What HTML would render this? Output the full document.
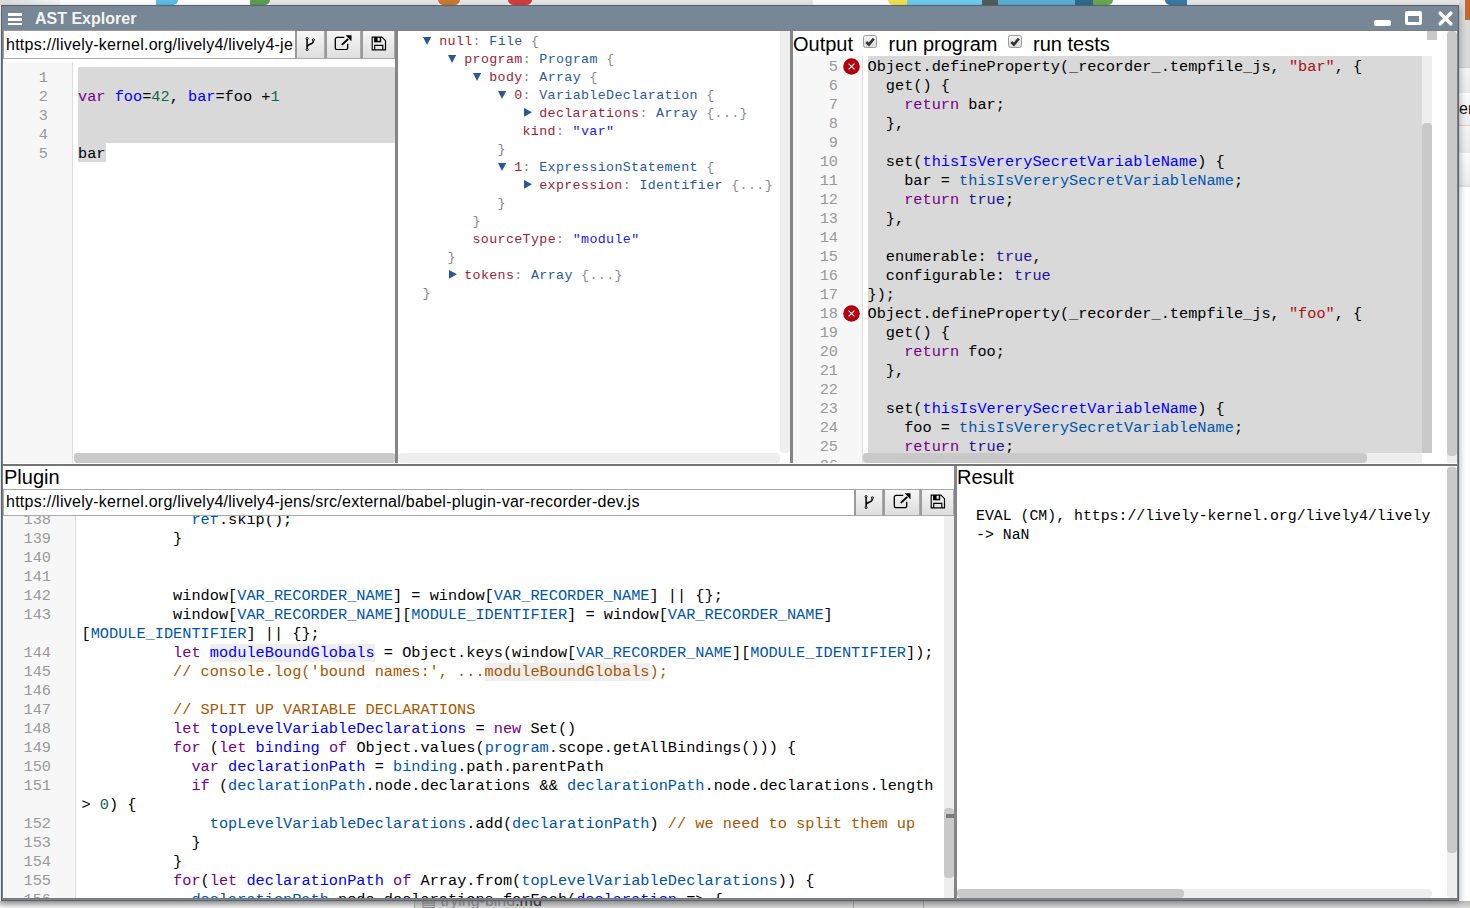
<!DOCTYPE html><html><head><meta charset="utf-8"><style>
*{box-sizing:border-box;margin:0;padding:0}
html,body{width:1470px;height:908px;overflow:hidden;position:relative}
body{font-family:"Liberation Sans",sans-serif;background:#ececec}
.a0{position:absolute}
.mono{font-family:"Liberation Mono",monospace;white-space:pre}
.k{color:#770088}.d{color:#0000ff}.v{color:#0055aa}.n{color:#116644}.s{color:#aa1111}.c{color:#aa5500}.a{color:#221199}
.hl{background:#eeeeee}
.ln{position:absolute;height:19px;line-height:19px;white-space:pre;font-family:"Liberation Mono",monospace;color:#000}
.gn{position:absolute;height:19px;line-height:19px;white-space:pre;font-family:"Liberation Mono",monospace;color:#999;text-align:right}
.btn{position:absolute;border:1px solid #a9a9a9;border-left:2px solid #9a9a9a;background:linear-gradient(#f6f6f6,#dedede)}
.ast{position:absolute;height:18px;line-height:18px;letter-spacing:0.37px;white-space:pre;font-family:"Liberation Mono",monospace;color:#8a8a8a}
.ak{color:#9b2335}.at{color:#2a5a9a}.as{color:#1a1aee}.tri{color:#2a5aa0}
.ui{position:absolute;font-family:"Liberation Sans",sans-serif;white-space:pre;color:#000}
</style></head><body><div class="a0" style="left:0px;top:0px;width:1470px;height:908px;background:#ffffff"></div><div class="a0" style="left:0px;top:0px;width:60px;height:5px;background:linear-gradient(90deg,#dcdcdc,#f4f4f4)"></div><div class="a0" style="left:156px;top:0px;width:22px;height:5px;background:#5bbde6;border-radius:0 0 14px 0"></div><div class="a0" style="left:250px;top:0px;width:20px;height:5px;background:#5a9e55;border-radius:0 0 14px 0"></div><div class="a0" style="left:270px;top:0px;width:168px;height:5px;background:#e6e6e6"></div><div class="a0" style="left:438px;top:0px;width:22px;height:5px;background:#c87a2e;border-radius:0 0 12px 12px"></div><div class="a0" style="left:460px;top:0px;width:48px;height:5px;background:#e6e6e6"></div><div class="a0" style="left:508px;top:0px;width:24px;height:5px;background:#d43c3c;border-radius:0 0 12px 12px"></div><div class="a0" style="left:532px;top:0px;width:281px;height:5px;background:#e6e6e6"></div><div class="a0" style="left:888px;top:0px;width:19px;height:5px;background:#f0e050;border-radius:0 0 0 10px"></div><div class="a0" style="left:907px;top:0px;width:75px;height:5px;background:#6ecbee"></div><div class="a0" style="left:982px;top:0px;width:16px;height:5px;background:#4f5e5a"></div><div class="a0" style="left:998px;top:0px;width:77px;height:5px;background:#5aaed6"></div><div class="a0" style="left:1075px;top:0px;width:18px;height:5px;background:#2f6a8e"></div><div class="a0" style="left:1093px;top:0px;width:20px;height:5px;background:#6aa84f;border-radius:0 0 10px 0"></div><div class="a0" style="left:1165px;top:0px;width:22px;height:5px;background:#3a78a8;border-radius:0 0 0 10px"></div><div class="a0" style="left:1187px;top:0px;width:273px;height:5px;background:#e6e6e6"></div><div class="a0" style="left:1459px;top:0px;width:11px;height:67px;background:#d9d9d9"></div><div class="a0" style="left:1459px;top:67px;width:11px;height:26px;background:linear-gradient(#f4f4f4,#e9e9e9);border-top:1px solid #cfcfcf"></div><div class="a0" style="left:1459px;top:93px;width:11px;height:32px;background:linear-gradient(#fafafa,#ececec);border-top:2px solid #fff"></div><div class="a0" style="left:1459px;top:125px;width:11px;height:28px;background:linear-gradient(#f4f4f4,#e9e9e9);border-top:1px solid #d4d4d4"></div><div class="a0" style="left:1459px;top:153px;width:11px;height:32px;background:linear-gradient(#fafafa,#ececec);border-top:2px solid #fff"></div><div class="a0" style="left:1459px;top:185px;width:11px;height:2px;background:#e0e0e0"></div><div class="ui" style="left:1459px;top:99px;font-size:16px;line-height:20px;color:#111">er</div><div class="a0" style="left:1465px;top:0px;width:5px;height:20px;background:#c06a30"></div><div class="a0" style="left:0px;top:901px;width:414px;height:7px;background:linear-gradient(#bcbcbc,#f4f4f4)"></div><div class="a0" style="left:414px;top:901px;width:1056px;height:7px;background:linear-gradient(#b8b8b8,#d9d9d9)"></div><div class="a0" style="left:853px;top:901px;width:1px;height:7px;background:#a0a0a0"></div><div class="a0" style="left:923px;top:901px;width:1px;height:7px;background:#a0a0a0"></div><div class="a0" style="left:414px;top:901px;width:1px;height:7px;background:#a8a8a8"></div><div class="ui" style="left:421px;top:891px;font-size:16px;color:#8c8c8c">&#9636; trying-bind<span style="color:#3a3a3a">.md</span></div><div class="a0" style="left:1px;top:5px;width:1458px;height:896px;background:#56626d;box-shadow:1px 2px 6px rgba(0,0,0,.3)"></div><div class="a0" style="left:2px;top:6px;width:1456px;height:894px;background:#778795"></div><div class="a0" style="left:2px;top:31px;width:1px;height:867px;background:#7d7d7d"></div><div class="a0" style="left:1457px;top:31px;width:1px;height:867px;background:#858585"></div><div class="a0" style="left:2px;top:898px;width:1456px;height:1px;background:#777"></div><div class="a0" style="left:2px;top:30px;width:1456px;height:1px;background:#7d7f80"></div><div class="a0" style="left:8px;top:13.2px;width:14.4px;height:2.6px;background:#fff"></div><div class="a0" style="left:8px;top:18.0px;width:14.4px;height:2.6px;background:#fff"></div><div class="a0" style="left:8px;top:22.7px;width:14.4px;height:2.6px;background:#fff"></div><div class="ui" style="left:35px;top:10px;font-size:16px;line-height:18px;font-weight:bold;color:#f4f4f4">AST Explorer</div><div class="a0" style="left:1373.5px;top:20px;width:17px;height:5.6px;background:#fff;border-radius:2px"></div><div class="a0" style="left:1405px;top:11px;width:17px;height:14.4px;border:3px solid #fff;border-top-width:5px;border-radius:2px"></div><svg class="a0" style="left:1437px;top:10px" width="17" height="17" viewBox="0 0 17 17"><path d="M3.2 3.2 L13.8 13.8 M13.8 3.2 L3.2 13.8" stroke="#fff" stroke-width="3.6" stroke-linecap="round"/></svg><div class="a0" style="left:3px;top:31px;width:1454px;height:867px;background:#fff"></div><div class="a0" style="left:3px;top:30px;width:292px;height:29px;background:#fff;border:1px solid #9a9a9a;border-right:none;border-bottom-color:#a9a9a9"></div><div class="ui" style="left:6px;top:35px;font-size:16px;line-height:20px;letter-spacing:0.26px;width:288px;overflow:hidden">https://lively-kernel.org/lively4/lively4-jens/src/external/babel-plugin-var-recorder-dev.js</div><div class="btn" style="left:295px;top:31px;width:30px;height:28px;border-top:none"></div><div class="btn" style="left:325px;top:31px;width:36px;height:28px;border-top:none"></div><div class="btn" style="left:361px;top:31px;width:34px;height:28px;border-top:none"></div><svg class="a0" style="left:304.9px;top:37.1px" width="11" height="14.5" viewBox="0 0 11 14.5"><g fill="none" stroke="#000"><circle cx="2.1" cy="1.6" r="1.05" stroke-width="1"/><circle cx="8.4" cy="2.8" r="1.05" stroke-width="1"/><circle cx="2.1" cy="12.5" r="1.05" stroke-width="1"/><path d="M2.1 2.6 V11.5" stroke-width="1.5"/><path d="M8.4 3.9 C8.4 7.6 2.6 6.8 2.1 9.6" stroke-width="1.5"/></g></svg><svg class="a0" style="left:334.1px;top:34.6px" width="18" height="15.5" viewBox="0 0 18 15.5"><g fill="none" stroke="#000" stroke-width="1.3"><path d="M10.3 2.4 H3.2 Q1.3 2.4 1.3 4.3 V12.7 Q1.3 14.6 3.2 14.6 H11.8 Q13.7 14.6 13.7 12.7 V8.8"/><path d="M7.8 9.9 L14.2 4" stroke-width="1.9"/></g><path d="M11.6 0.3 H17.5 V6.2 Z" fill="#000"/></svg><svg class="a0" style="left:371.1px;top:36.0px" width="16" height="15" viewBox="0 0 16 15"><path d="M1.2 1.1 H10.9 L14.5 4.7 V13.8 H1.2 Z" fill="none" stroke="#000" stroke-width="1.15"/><rect x="3.1" y="1.1" width="7.1" height="5.2" fill="#000"/><rect x="6.6" y="1.8" width="2.1" height="3" fill="#fff"/><path d="M3.7 13.8 V9.4 H11.8 V13.8" fill="none" stroke="#000" stroke-width="1.15"/></svg><div class="a0" style="left:4px;top:62px;width:69px;height:401px;background:#f7f7f7;border-right:1px solid #dddddd"></div><div class="a0" style="left:78px;top:67px;width:317px;height:76px;background:#d9d9d9"></div><div class="a0" style="left:78px;top:143px;width:28px;height:19px;background:#d9d9d9"></div><div class="gn" style="left:3px;top:67px;width:45px;font-size:15.27px;padding-top:2px">1</div><div class="ln" style="left:78px;top:67px;font-size:15.27px;padding-top:2px"></div><div class="gn" style="left:3px;top:86px;width:45px;font-size:15.27px;padding-top:2px">2</div><div class="ln" style="left:78px;top:86px;font-size:15.27px;padding-top:2px"><span class="k">var</span> <span class="d">foo</span>=<span class="n">42</span>, <span class="d">bar</span>=foo +<span class="n">1</span></div><div class="gn" style="left:3px;top:105px;width:45px;font-size:15.27px;padding-top:2px">3</div><div class="ln" style="left:78px;top:105px;font-size:15.27px;padding-top:2px"></div><div class="gn" style="left:3px;top:124px;width:45px;font-size:15.27px;padding-top:2px">4</div><div class="ln" style="left:78px;top:124px;font-size:15.27px;padding-top:2px"></div><div class="gn" style="left:3px;top:143px;width:45px;font-size:15.27px;padding-top:2px">5</div><div class="ln" style="left:78px;top:143px;font-size:15.27px;padding-top:2px">bar</div><div class="a0" style="left:73.5px;top:453px;width:321px;height:9.5px;background:#c9c9c9;border-radius:3px"></div><div class="a0" style="left:395px;top:31px;width:3px;height:432px;background:#858585"></div><svg class="a0" style="left:423.20px;top:37px" width="8.1" height="8" viewBox="0 0 8.1 8"><path d="M0 0 H8.1 L4.05 8 Z" fill="#2b5797"/></svg><div class="ast" style="left:439.20px;top:31px;font-size:13.3px;padding-top:2px"><span class="ak">null</span>: <span class="at">File</span> {</div><svg class="a0" style="left:448.20px;top:55px" width="8.1" height="8" viewBox="0 0 8.1 8"><path d="M0 0 H8.1 L4.05 8 Z" fill="#2b5797"/></svg><div class="ast" style="left:464.20px;top:49px;font-size:13.3px;padding-top:2px"><span class="ak">program</span>: <span class="at">Program</span> {</div><svg class="a0" style="left:473.20px;top:73px" width="8.1" height="8" viewBox="0 0 8.1 8"><path d="M0 0 H8.1 L4.05 8 Z" fill="#2b5797"/></svg><div class="ast" style="left:489.20px;top:67px;font-size:13.3px;padding-top:2px"><span class="ak">body</span>: <span class="at">Array</span> {</div><svg class="a0" style="left:498.20px;top:91px" width="8.1" height="8" viewBox="0 0 8.1 8"><path d="M0 0 H8.1 L4.05 8 Z" fill="#2b5797"/></svg><div class="ast" style="left:514.20px;top:85px;font-size:13.3px;padding-top:2px"><span class="ak">0</span>: <span class="at">VariableDeclaration</span> {</div><svg class="a0" style="left:524.00px;top:108.10px" width="8" height="8.7" viewBox="0 0 8 8.7"><path d="M0 0 V8.7 L8 4.35 Z" fill="#2b5797"/></svg><div class="ast" style="left:539.20px;top:103px;font-size:13.3px;padding-top:2px"><span class="ak">declarations</span>: <span class="at">Array</span> {...}</div><div class="ast" style="left:522.5px;top:121px;font-size:13.3px;padding-top:2px"><span class="ak">kind</span>: <span class="as">"var"</span></div><div class="ast" style="left:497.5px;top:139px;font-size:13.3px;padding-top:2px">}</div><svg class="a0" style="left:498.20px;top:163px" width="8.1" height="8" viewBox="0 0 8.1 8"><path d="M0 0 H8.1 L4.05 8 Z" fill="#2b5797"/></svg><div class="ast" style="left:514.20px;top:157px;font-size:13.3px;padding-top:2px"><span class="ak">1</span>: <span class="at">ExpressionStatement</span> {</div><svg class="a0" style="left:524.00px;top:180.10px" width="8" height="8.7" viewBox="0 0 8 8.7"><path d="M0 0 V8.7 L8 4.35 Z" fill="#2b5797"/></svg><div class="ast" style="left:539.20px;top:175px;font-size:13.3px;padding-top:2px"><span class="ak">expression</span>: <span class="at">Identifier</span> {...}</div><div class="ast" style="left:497.5px;top:193px;font-size:13.3px;padding-top:2px">}</div><div class="ast" style="left:472.5px;top:211px;font-size:13.3px;padding-top:2px">}</div><div class="ast" style="left:472.5px;top:229px;font-size:13.3px;padding-top:2px"><span class="ak">sourceType</span>: <span class="as">"module"</span></div><div class="ast" style="left:447.5px;top:247px;font-size:13.3px;padding-top:2px">}</div><svg class="a0" style="left:449.00px;top:270.10px" width="8" height="8.7" viewBox="0 0 8 8.7"><path d="M0 0 V8.7 L8 4.35 Z" fill="#2b5797"/></svg><div class="ast" style="left:464.20px;top:265px;font-size:13.3px;padding-top:2px"><span class="ak">tokens</span>: <span class="at">Array</span> {...}</div><div class="ast" style="left:422.5px;top:283px;font-size:13.3px;padding-top:2px">}</div><div class="a0" style="left:780px;top:31px;width:9.5px;height:422px;background:#eeeeee;border-radius:0 0 4px 4px"></div><div class="a0" style="left:398px;top:453px;width:382px;height:9.5px;background:#eeeeee;border-radius:4px"></div><div class="a0" style="left:790px;top:31px;width:3px;height:432px;background:#858585"></div><div class="ui" style="left:793px;top:33px;font-size:20px;line-height:23px">Output</div><div class="a0" style="left:863.2px;top:35.2px;width:13.6px;height:13.2px;border:1px solid #9c9c9c;border-radius:2.5px;background:linear-gradient(#f4f4f4,#dcdcdc)"></div><svg class="a0" style="left:865.2px;top:37.2px" width="10" height="10" viewBox="0 0 10 10"><path d="M1.3 5.0 L3.9 7.6 L8.8 1.6" fill="none" stroke="#333" stroke-width="2.6"/></svg><div class="ui" style="left:888.5px;top:33px;font-size:20px;line-height:23px">run program</div><div class="a0" style="left:1008.3px;top:35.2px;width:13.6px;height:13.2px;border:1px solid #9c9c9c;border-radius:2.5px;background:linear-gradient(#f4f4f4,#dcdcdc)"></div><svg class="a0" style="left:1010.3px;top:37.2px" width="10" height="10" viewBox="0 0 10 10"><path d="M1.3 5.0 L3.9 7.6 L8.8 1.6" fill="none" stroke="#333" stroke-width="2.6"/></svg><div class="ui" style="left:1033px;top:33px;font-size:20px;line-height:23px">run tests</div><div class="a0" style="left:1427px;top:31px;width:10px;height:9px;background:#c8c8c8"></div><div class="a0" style="left:793px;top:56px;width:70px;height:407px;background:#f7f7f7;border-right:1px solid #dddddd"></div><div class="a0" style="left:868px;top:56px;width:554px;height:397px;background:#d9d9d9"></div><div class="a0" style="left:793px;top:56px;width:629px;height:407px;overflow:hidden"><div class="gn" style="left:0px;top:0px;width:45px;font-size:15.27px;padding-top:2px">5</div><div class="ln" style="left:74.5px;top:0px;font-size:15.27px;padding-top:2px">Object.defineProperty(_recorder_.tempfile_js, <span class="s">"bar"</span>, {</div><div class="gn" style="left:0px;top:19px;width:45px;font-size:15.27px;padding-top:2px">6</div><div class="ln" style="left:74.5px;top:19px;font-size:15.27px;padding-top:2px">  get() {</div><div class="gn" style="left:0px;top:38px;width:45px;font-size:15.27px;padding-top:2px">7</div><div class="ln" style="left:74.5px;top:38px;font-size:15.27px;padding-top:2px">    <span class="k">return</span> bar;</div><div class="gn" style="left:0px;top:57px;width:45px;font-size:15.27px;padding-top:2px">8</div><div class="ln" style="left:74.5px;top:57px;font-size:15.27px;padding-top:2px">  },</div><div class="gn" style="left:0px;top:76px;width:45px;font-size:15.27px;padding-top:2px">9</div><div class="ln" style="left:74.5px;top:76px;font-size:15.27px;padding-top:2px"></div><div class="gn" style="left:0px;top:95px;width:45px;font-size:15.27px;padding-top:2px">10</div><div class="ln" style="left:74.5px;top:95px;font-size:15.27px;padding-top:2px">  set(<span class="d">thisIsVererySecretVariableName</span>) {</div><div class="gn" style="left:0px;top:114px;width:45px;font-size:15.27px;padding-top:2px">11</div><div class="ln" style="left:74.5px;top:114px;font-size:15.27px;padding-top:2px">    bar = <span class="v">thisIsVererySecretVariableName</span>;</div><div class="gn" style="left:0px;top:133px;width:45px;font-size:15.27px;padding-top:2px">12</div><div class="ln" style="left:74.5px;top:133px;font-size:15.27px;padding-top:2px">    <span class="k">return</span> <span class="a">true</span>;</div><div class="gn" style="left:0px;top:152px;width:45px;font-size:15.27px;padding-top:2px">13</div><div class="ln" style="left:74.5px;top:152px;font-size:15.27px;padding-top:2px">  },</div><div class="gn" style="left:0px;top:171px;width:45px;font-size:15.27px;padding-top:2px">14</div><div class="ln" style="left:74.5px;top:171px;font-size:15.27px;padding-top:2px"></div><div class="gn" style="left:0px;top:190px;width:45px;font-size:15.27px;padding-top:2px">15</div><div class="ln" style="left:74.5px;top:190px;font-size:15.27px;padding-top:2px">  enumerable: <span class="a">true</span>,</div><div class="gn" style="left:0px;top:209px;width:45px;font-size:15.27px;padding-top:2px">16</div><div class="ln" style="left:74.5px;top:209px;font-size:15.27px;padding-top:2px">  configurable: <span class="a">true</span></div><div class="gn" style="left:0px;top:228px;width:45px;font-size:15.27px;padding-top:2px">17</div><div class="ln" style="left:74.5px;top:228px;font-size:15.27px;padding-top:2px">});</div><div class="gn" style="left:0px;top:247px;width:45px;font-size:15.27px;padding-top:2px">18</div><div class="ln" style="left:74.5px;top:247px;font-size:15.27px;padding-top:2px">Object.defineProperty(_recorder_.tempfile_js, <span class="s">"foo"</span>, {</div><div class="gn" style="left:0px;top:266px;width:45px;font-size:15.27px;padding-top:2px">19</div><div class="ln" style="left:74.5px;top:266px;font-size:15.27px;padding-top:2px">  get() {</div><div class="gn" style="left:0px;top:285px;width:45px;font-size:15.27px;padding-top:2px">20</div><div class="ln" style="left:74.5px;top:285px;font-size:15.27px;padding-top:2px">    <span class="k">return</span> foo;</div><div class="gn" style="left:0px;top:304px;width:45px;font-size:15.27px;padding-top:2px">21</div><div class="ln" style="left:74.5px;top:304px;font-size:15.27px;padding-top:2px">  },</div><div class="gn" style="left:0px;top:323px;width:45px;font-size:15.27px;padding-top:2px">22</div><div class="ln" style="left:74.5px;top:323px;font-size:15.27px;padding-top:2px"></div><div class="gn" style="left:0px;top:342px;width:45px;font-size:15.27px;padding-top:2px">23</div><div class="ln" style="left:74.5px;top:342px;font-size:15.27px;padding-top:2px">  set(<span class="d">thisIsVererySecretVariableName</span>) {</div><div class="gn" style="left:0px;top:361px;width:45px;font-size:15.27px;padding-top:2px">24</div><div class="ln" style="left:74.5px;top:361px;font-size:15.27px;padding-top:2px">    foo = <span class="v">thisIsVererySecretVariableName</span>;</div><div class="gn" style="left:0px;top:380px;width:45px;font-size:15.27px;padding-top:2px">25</div><div class="ln" style="left:74.5px;top:380px;font-size:15.27px;padding-top:2px">    <span class="k">return</span> <span class="a">true</span>;</div><div class="gn" style="left:0px;top:399px;width:45px;font-size:15.27px;padding-top:2px">26</div></div><svg class="a0" style="left:843px;top:57.8px" width="17" height="17" viewBox="0 0 17 17"><circle cx="8.5" cy="8.5" r="8.3" fill="#b0000e"/><path d="M5.6 5.6 L11.4 11.4 M11.4 5.6 L5.6 11.4" stroke="#fff" stroke-width="1.05"/></svg><svg class="a0" style="left:843px;top:304.8px" width="17" height="17" viewBox="0 0 17 17"><circle cx="8.5" cy="8.5" r="8.3" fill="#b0000e"/><path d="M5.6 5.6 L11.4 11.4 M11.4 5.6 L5.6 11.4" stroke="#fff" stroke-width="1.05"/></svg><div class="a0" style="left:1422px;top:56px;width:10px;height:397px;background:#eeeeee"></div><div class="a0" style="left:1422px;top:123.3px;width:10px;height:329.7px;background:#c9c9c9;border-radius:4px 4px 0 0"></div><div class="a0" style="left:863px;top:453px;width:559px;height:9.5px;background:#eeeeee"></div><div class="a0" style="left:863px;top:453px;width:504px;height:9.5px;background:#c9c9c9;border-radius:4px"></div><div class="a0" style="left:1447px;top:31px;width:10px;height:432px;background:#eeeeee"></div><div class="a0" style="left:1447px;top:31px;width:10px;height:425px;background:#c9c9c9;border-radius:4px"></div><div class="a0" style="left:3px;top:464px;width:1454px;height:2px;background:#757575"></div><div class="ui" style="left:4px;top:465.5px;font-size:20px;line-height:23px">Plugin</div><div class="a0" style="left:3px;top:489px;width:851px;height:27px;background:#fff;border-top:1px solid #a9a9a9;border-bottom:1px solid #a9a9a9;border-left:1px solid #a9a9a9"></div><div class="ui" style="left:6px;top:492px;font-size:16px;line-height:20px;letter-spacing:0.26px">https://lively-kernel.org/lively4/lively4-jens/src/external/babel-plugin-var-recorder-dev.js</div><div class="btn" style="left:854px;top:489px;width:29px;height:27px"></div><div class="btn" style="left:883px;top:489px;width:37px;height:27px"></div><div class="btn" style="left:920px;top:489px;width:34px;height:27px"></div><svg class="a0" style="left:863.5px;top:494.8px" width="11" height="14.5" viewBox="0 0 11 14.5"><g fill="none" stroke="#000"><circle cx="2.1" cy="1.6" r="1.05" stroke-width="1"/><circle cx="8.4" cy="2.8" r="1.05" stroke-width="1"/><circle cx="2.1" cy="12.5" r="1.05" stroke-width="1"/><path d="M2.1 2.6 V11.5" stroke-width="1.5"/><path d="M8.4 3.9 C8.4 7.6 2.6 6.8 2.1 9.6" stroke-width="1.5"/></g></svg><svg class="a0" style="left:892.7px;top:493px" width="18" height="15.5" viewBox="0 0 18 15.5"><g fill="none" stroke="#000" stroke-width="1.3"><path d="M10.3 2.4 H3.2 Q1.3 2.4 1.3 4.3 V12.7 Q1.3 14.6 3.2 14.6 H11.8 Q13.7 14.6 13.7 12.7 V8.8"/><path d="M7.8 9.9 L14.2 4" stroke-width="1.9"/></g><path d="M11.6 0.3 H17.5 V6.2 Z" fill="#000"/></svg><svg class="a0" style="left:929.5px;top:494.3px" width="16" height="15" viewBox="0 0 16 15"><path d="M1.2 1.1 H10.9 L14.5 4.7 V13.8 H1.2 Z" fill="none" stroke="#000" stroke-width="1.15"/><rect x="3.1" y="1.1" width="7.1" height="5.2" fill="#000"/><rect x="6.6" y="1.8" width="2.1" height="3" fill="#fff"/><path d="M3.7 13.8 V9.4 H11.8 V13.8" fill="none" stroke="#000" stroke-width="1.15"/></svg><div class="a0" style="left:3px;top:516px;width:73px;height:382px;background:#f7f7f7;border-right:1px solid #dddddd"></div><div class="a0" style="left:3px;top:516px;width:941px;height:382px;overflow:hidden"><div class="gn" style="left:0px;top:-7.5px;width:48px;font-size:15.27px;padding-top:2px">138</div><div class="ln" style="left:78.5px;top:-7.5px;font-size:15.27px;padding-top:2px">            <span class="v">ref</span>.skip();</div><div class="gn" style="left:0px;top:11.5px;width:48px;font-size:15.27px;padding-top:2px">139</div><div class="ln" style="left:78.5px;top:11.5px;font-size:15.27px;padding-top:2px">          }</div><div class="gn" style="left:0px;top:30.5px;width:48px;font-size:15.27px;padding-top:2px">140</div><div class="ln" style="left:78.5px;top:30.5px;font-size:15.27px;padding-top:2px"></div><div class="gn" style="left:0px;top:49.5px;width:48px;font-size:15.27px;padding-top:2px">141</div><div class="ln" style="left:78.5px;top:49.5px;font-size:15.27px;padding-top:2px"></div><div class="gn" style="left:0px;top:68.5px;width:48px;font-size:15.27px;padding-top:2px">142</div><div class="ln" style="left:78.5px;top:68.5px;font-size:15.27px;padding-top:2px">          window[<span class="v">VAR_RECORDER_NAME</span>] = window[<span class="v">VAR_RECORDER_NAME</span>] || {};</div><div class="gn" style="left:0px;top:87.5px;width:48px;font-size:15.27px;padding-top:2px">143</div><div class="ln" style="left:78.5px;top:87.5px;font-size:15.27px;padding-top:2px">          window[<span class="v">VAR_RECORDER_NAME</span>][<span class="v">MODULE_IDENTIFIER</span>] = window[<span class="v">VAR_RECORDER_NAME</span>]</div><div class="ln" style="left:78.5px;top:106.5px;font-size:15.27px;padding-top:2px">[<span class="v">MODULE_IDENTIFIER</span>] || {};</div><div class="gn" style="left:0px;top:125.5px;width:48px;font-size:15.27px;padding-top:2px">144</div><div class="ln" style="left:78.5px;top:125.5px;font-size:15.27px;padding-top:2px">          <span class="k">let</span> <span class="d hl">moduleBoundGlobals</span> = Object.keys(window[<span class="v">VAR_RECORDER_NAME</span>][<span class="v">MODULE_IDENTIFIER</span>]);</div><div class="gn" style="left:0px;top:144.5px;width:48px;font-size:15.27px;padding-top:2px">145</div><div class="ln" style="left:78.5px;top:144.5px;font-size:15.27px;padding-top:2px">          <span class="c">// console.log('bound names:', ...</span><span class="c hl">moduleBoundGlobals</span><span class="c">);</span></div><div class="gn" style="left:0px;top:163.5px;width:48px;font-size:15.27px;padding-top:2px">146</div><div class="ln" style="left:78.5px;top:163.5px;font-size:15.27px;padding-top:2px"></div><div class="gn" style="left:0px;top:182.5px;width:48px;font-size:15.27px;padding-top:2px">147</div><div class="ln" style="left:78.5px;top:182.5px;font-size:15.27px;padding-top:2px">          <span class="c">// SPLIT UP VARIABLE DECLARATIONS</span></div><div class="gn" style="left:0px;top:201.5px;width:48px;font-size:15.27px;padding-top:2px">148</div><div class="ln" style="left:78.5px;top:201.5px;font-size:15.27px;padding-top:2px">          <span class="k">let</span> <span class="d">topLevelVariableDeclarations</span> = <span class="k">new</span> Set()</div><div class="gn" style="left:0px;top:220.5px;width:48px;font-size:15.27px;padding-top:2px">149</div><div class="ln" style="left:78.5px;top:220.5px;font-size:15.27px;padding-top:2px">          <span class="k">for</span> (<span class="k">let</span> <span class="d">binding</span> <span class="k">of</span> Object.values(<span class="v">program</span>.scope.getAllBindings())) {</div><div class="gn" style="left:0px;top:239.5px;width:48px;font-size:15.27px;padding-top:2px">150</div><div class="ln" style="left:78.5px;top:239.5px;font-size:15.27px;padding-top:2px">            <span class="k">var</span> <span class="d">declarationPath</span> = <span class="v">binding</span>.path.parentPath</div><div class="gn" style="left:0px;top:258.5px;width:48px;font-size:15.27px;padding-top:2px">151</div><div class="ln" style="left:78.5px;top:258.5px;font-size:15.27px;padding-top:2px">            <span class="k">if</span> (<span class="v">declarationPath</span>.node.declarations &amp;&amp; <span class="v">declarationPath</span>.node.declarations.length</div><div class="ln" style="left:78.5px;top:277.5px;font-size:15.27px;padding-top:2px">&gt; <span class="n">0</span>) {</div><div class="gn" style="left:0px;top:296.5px;width:48px;font-size:15.27px;padding-top:2px">152</div><div class="ln" style="left:78.5px;top:296.5px;font-size:15.27px;padding-top:2px">              <span class="v">topLevelVariableDeclarations</span>.add(<span class="v">declarationPath</span>) <span class="c">// we need to split them up</span></div><div class="gn" style="left:0px;top:315.5px;width:48px;font-size:15.27px;padding-top:2px">153</div><div class="ln" style="left:78.5px;top:315.5px;font-size:15.27px;padding-top:2px">            }</div><div class="gn" style="left:0px;top:334.5px;width:48px;font-size:15.27px;padding-top:2px">154</div><div class="ln" style="left:78.5px;top:334.5px;font-size:15.27px;padding-top:2px">          }</div><div class="gn" style="left:0px;top:353.5px;width:48px;font-size:15.27px;padding-top:2px">155</div><div class="ln" style="left:78.5px;top:353.5px;font-size:15.27px;padding-top:2px">          <span class="k">for</span>(<span class="k">let</span> <span class="d">declarationPath</span> <span class="k">of</span> Array.from(<span class="v">topLevelVariableDeclarations</span>)) {</div><div class="gn" style="left:0px;top:372.5px;width:48px;font-size:15.27px;padding-top:2px">156</div><div class="ln" style="left:78.5px;top:372.5px;font-size:15.27px;padding-top:2px">            <span class="v">declarationPath</span>.node.declarations.forEach(<span class="d">declaration</span> =&gt; {</div></div><div class="a0" style="left:944px;top:516px;width:10px;height:382px;background:#eeeeee"></div><div class="a0" style="left:944px;top:808.4px;width:10px;height:69.4px;background:#c9c9c9;border-radius:4px"></div><div class="a0" style="left:946px;top:814px;width:11px;height:3.6px;background:#7a7a7a"></div><div class="a0" style="left:954px;top:466px;width:3px;height:432px;background:#858585"></div><div class="ui" style="left:957px;top:465.5px;font-size:20px;line-height:23px">Result</div><div class="ln" style="left:976px;top:505px;font-size:14.85px;padding-top:2px;width:455px;overflow:hidden">EVAL (CM), https://lively-kernel.org/lively4/lively4-jens/src</div><div class="ln" style="left:976px;top:524px;font-size:14.85px;padding-top:2px">-&gt; NaN</div><div class="a0" style="left:957px;top:889px;width:475px;height:8.5px;background:#eeeeee;border-radius:4px"></div><div class="a0" style="left:957px;top:889px;width:227px;height:8.5px;background:#c9c9c9;border-radius:4px"></div><div class="a0" style="left:1447px;top:466px;width:10px;height:432px;background:#eeeeee;border-radius:4px"></div><div class="a0" style="left:1447px;top:466.5px;width:10px;height:386px;background:#c9c9c9;border-radius:4px"></div></body></html>
